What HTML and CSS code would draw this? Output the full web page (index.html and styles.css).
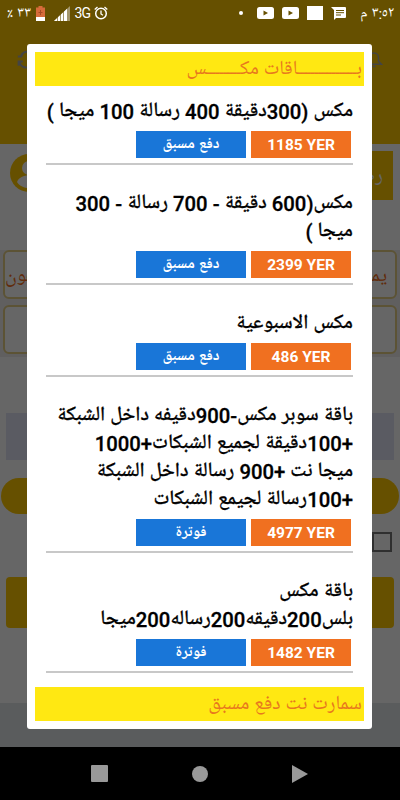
FILE: index.html
```html
<!DOCTYPE html>
<html lang="ar" dir="rtl">
<head>
    <meta charset="UTF-8">
    <meta name="viewport" content="width=device-width, initial-scale=1.0">
    <title>باقات مكس</title>
    <link rel="stylesheet" href="styles.css">
</head>
<body>
    <div class="page">
        <div class="app-bar">
            <svg class="bell" width="18" height="20" viewBox="0 0 24 24"><path d="M2 19h20l-4-4v-5a6 6 0 0 0-12 0v5zM10 22h4" fill="none" stroke="#aaa" stroke-width="2"/></svg>
            <svg class="sync" width="20" height="20" viewBox="0 0 24 24"><path d="M20 9a8 8 0 0 0-15-1M3 15a8 8 0 0 0 15 3M1 9h4l2-4M2 20v-5h5" fill="none" stroke="#aaa" stroke-width="2.5"/></svg>
        </div>
        <div class="account">
            <div class="balance">رصيد</div>
            <svg class="avatar" width="38" height="38" viewBox="0 0 38 38"><circle cx="19" cy="19" r="19" fill="#ffc700"/><circle cx="19" cy="14" r="7" fill="#fff"/><path d="M7 28c3-9 21-9 24 0-5 8-19 8-24 0z" fill="#fff"/></svg>
        </div>
        <div class="fields">
            <div class="field operator"><span>يمن</span><span>تلفون</span></div>
            <div class="field number"></div>
        </div>
        <div class="amount"></div>
        <div class="pill"></div>
        <div class="check"></div>
        <div class="submit"></div>
        <div class="page-footer"></div>
    </div>

    <div class="backdrop">
        <div class="status-bar">
            <span class="time">٣:٥٢ م</span>
            <div class="notifications">
                <svg width="15" height="13" viewBox="0 0 15 13"><path d="M0 0h14q1 0 1 1v9q0 1-1 1H5l-2 2V3z" fill="#fff"/><path d="M5 3.500h8M5 5.700h8M5 8h5" stroke="#665000"/></svg>
                <svg width="16" height="14" viewBox="0 0 16 14"><path d="M0 0h16v14H0z" fill="#fff"/></svg>
                <svg width="17" height="12" viewBox="0 0 17 12"><rect width="17" height="12" rx="2.500" fill="#fff"/><path d="M6.500 3.500v5l4.500-2.500z" fill="#665000"/></svg>
                <svg width="17" height="12" viewBox="0 0 17 12"><rect width="17" height="12" rx="2.500" fill="#fff"/><path d="M6.500 3.500v5l4.500-2.500z" fill="#665000"/></svg>
                <svg class="more" width="4" height="4" viewBox="0 0 4 4"><circle cx="2" cy="2" r="2" fill="#fff"/></svg>
            </div>
            <div class="signals">
                <svg width="14" height="14" viewBox="0 0 14 14"><circle cx="7" cy="7.500" r="5.300" fill="none" stroke="#fff" stroke-width="1.500"/><path d="M7 4.500v3.500l2 1.200M.7 3.500 3.500 1M13.300 3.500 10.500 1" fill="none" stroke="#fff" stroke-width="1.300"/></svg>
                <span class="network">3G</span>
                <svg width="16" height="15" viewBox="0 0 16 15"><path d="M0 15 16 0v15z" fill="#a3966b"/><path d="M0 15 13 2.800V15z" fill="#fff"/><path d="M3.500 10v5M6.500 7v8M9.500 5v10" stroke="#665000" stroke-width=".6"/></svg>
                <svg class="battery" width="9" height="15" viewBox="0 0 9 15"><path d="M2.500 0h4v1.500H9V15H0V1.500h2.500z" fill="#d66b3a"/><path d="M0 11h9v4H0z" fill="#fff"/><path d="M4.500 4v5M2.500 6.500h4" stroke="#a64b24"/></svg>
                <span class="percent">٣٣ ٪</span>
            </div>
        </div>

        <div class="dialog">
            <h2 class="group"><span>بــــــــــــــاقات مكــــــــس</span></h2>
            <ul class="packages">
                <li>
                    <p>مكس (300دقيقة 400 رسالة 100 ميجا )</p>
                    <div class="tags"><span class="price">1185 YER</span><span class="type">دفع مسبق</span></div>
                </li>
                <li>
                    <p>مكس(600 دقيقة - 700 رسالة - 300<br>ميجا )</p>
                    <div class="tags"><span class="price">2399 YER</span><span class="type">دفع مسبق</span></div>
                </li>
                <li>
                    <p>مكس الاسبوعية</p>
                    <div class="tags"><span class="price">486 YER</span><span class="type">دفع مسبق</span></div>
                </li>
                <li>
                    <p>باقة سوبر مكس-900دقيفه داخل الشبكة<br>+100دقيقة لجميع الشبكات+1000<br>ميجا نت +900 رسالة داخل الشبكة<br>+100رسالة لجيمع الشبكات</p>
                    <div class="tags"><span class="price">4977 YER</span><span class="type">فوترة</span></div>
                </li>
                <li>
                    <p>باقة مكس<br>بلس200دقيقه200رساله200ميجا</p>
                    <div class="tags"><span class="price">1482 YER</span><span class="type">فوترة</span></div>
                </li>
            </ul>
            <h2 class="group"><span>سمارت نت دفع مسبق</span></h2>
        </div>
    </div>

    <div class="nav-bar">
        <svg width="16" height="18" viewBox="0 0 16 18"><path d="M0 0l16 9-16 9z" fill="#999"/></svg>
        <svg width="16" height="16" viewBox="0 0 16 16"><circle cx="8" cy="8" r="8" fill="#999"/></svg>
        <svg width="17" height="17" viewBox="0 0 17 17"><rect width="17" height="17" rx="1" fill="#999"/></svg>
    </div>
</body>
</html>
```
FILE: styles.css
```css
* {
    box-sizing: border-box;
}
body {
    font-family: Roboto, "Noto Naskh Arabic UI", "Noto Naskh Arabic", serif;
    margin: 0;
    height: 800px;
    overflow: hidden;
    position: relative;
    display: flex;
    flex-direction: column;
}
svg {
    display: block;
    flex: none;
}
.page {
    height: 747px;
    background-color: #fff;
    display: flex;
    flex-direction: column;
    overflow: hidden;
}
.app-bar {
    height: 144px;
    flex: none;
    background-color: #ffc700;
    display: flex;
    justify-content: space-between;
    padding: 49px 17px 0;
}
.account {
    height: 106px;
    flex: none;
    display: flex;
    justify-content: space-between;
    align-items: flex-start;
    padding: 7px 7px 0 10px;
}
.avatar {
    margin-top: 3px;
}
.balance {
    width: 80px;
    height: 49px;
    padding: 0 10px;
    line-height: 52px;
    font-size: 20px;
    color: #fff;
    background-color: #ffc700;
}
.fields {
    height: 107px;
    flex: none;
    background-color: #f0eeee;
    padding: 0 3px;
}
.field {
    height: 49px;
    border: 2px solid #e6cf85;
    border-radius: 6px;
    background-color: #fff;
}
.operator {
    display: flex;
    justify-content: space-between;
    padding: 0 8px 0 0;
    margin-bottom: 6px;
    line-height: 50px;
    font-size: 20px;
    color: #f26f21;
}
.amount {
    height: 47px;
    flex: none;
    margin: 56px 6px 18px;
    background-color: #e2e4f4;
}
.pill {
    height: 36px;
    flex: none;
    margin: 0 1px 18px;
    border-radius: 18px;
    background-color: #ffc700;
}
.check {
    width: 20px;
    height: 20px;
    flex: none;
    margin-right: 8px;
    border: 2px solid #777;
}
.submit {
    height: 51px;
    flex: none;
    margin: 25px 6px 75px;
    border-radius: 4px;
    background-color: #ffc700;
}
.page-footer {
    flex: 1;
    background-color: #e0e5e8;
}
.backdrop {
    position: absolute;
    top: 0;
    left: 0;
    width: 400px;
    height: 747px;
    background-color: rgba(0, 0, 0, 0.6);
}
.status-bar {
    height: 44px;
    padding: 0 6px 18px;
    display: flex;
    align-items: center;
    color: #fff;
    font-size: 15px;
    white-space: nowrap;
}
.time {
    width: 35px;
}
.notifications {
    display: flex;
    align-items: center;
    gap: 8px;
    margin-right: 13px;
}
.more {
    margin-right: 6px;
}
.signals {
    display: flex;
    align-items: center;
    gap: 4px;
    margin-right: auto;
}
.network {
    width: 16px;
    font-size: 14px;
    letter-spacing: -1px;
}
.battery {
    margin: 0 5px 0 1px;
}
.percent {
    width: 25px;
}
.dialog {
    width: 345px;
    height: 685px;
    margin-right: 28px;
    padding: 8px;
    border-radius: 3px;
    background-color: #fff;
}
.group {
    height: 34px;
    margin: 0;
    padding: 0 2px;
    line-height: 36px;
    font-size: 20px;
    font-weight: 400;
    white-space: nowrap;
    color: #e8781e;
    background-color: #ffe812;
}
.packages {
    list-style: none;
    margin: 0 11px 14px;
    padding: 0;
}
.packages li {
    padding: 25px 0 5px;
    border-bottom: 2px solid #c8c8c8;
}
.packages li:first-child {
    padding-top: 12px;
}
.packages p {
    margin: 0 0 5px;
    line-height: 28px;
    font-size: 20.3px;
    font-weight: 500;
    -webkit-text-stroke: 0.3px #000;
    white-space: nowrap;
    color: #000;
}
.tags {
    display: flex;
    gap: 5px;
    padding-right: 2px;
}
.tags span {
    height: 27px;
    line-height: 28px;
    text-align: center;
    font-weight: 700;
    color: #fff;
}
.tags .price {
    width: 100px;
    font-size: 15.5px;
    background-color: #f07020;
    direction: ltr;
}
.tags .type {
    width: 110px;
    font-size: 15.5px;
    line-height: 28px;
    background-color: #1976d8;
}
.nav-bar {
    height: 53px;
    padding: 0 92px 0 91px;
    display: flex;
    align-items: center;
    justify-content: space-between;
    background-color: #000;
}
```
